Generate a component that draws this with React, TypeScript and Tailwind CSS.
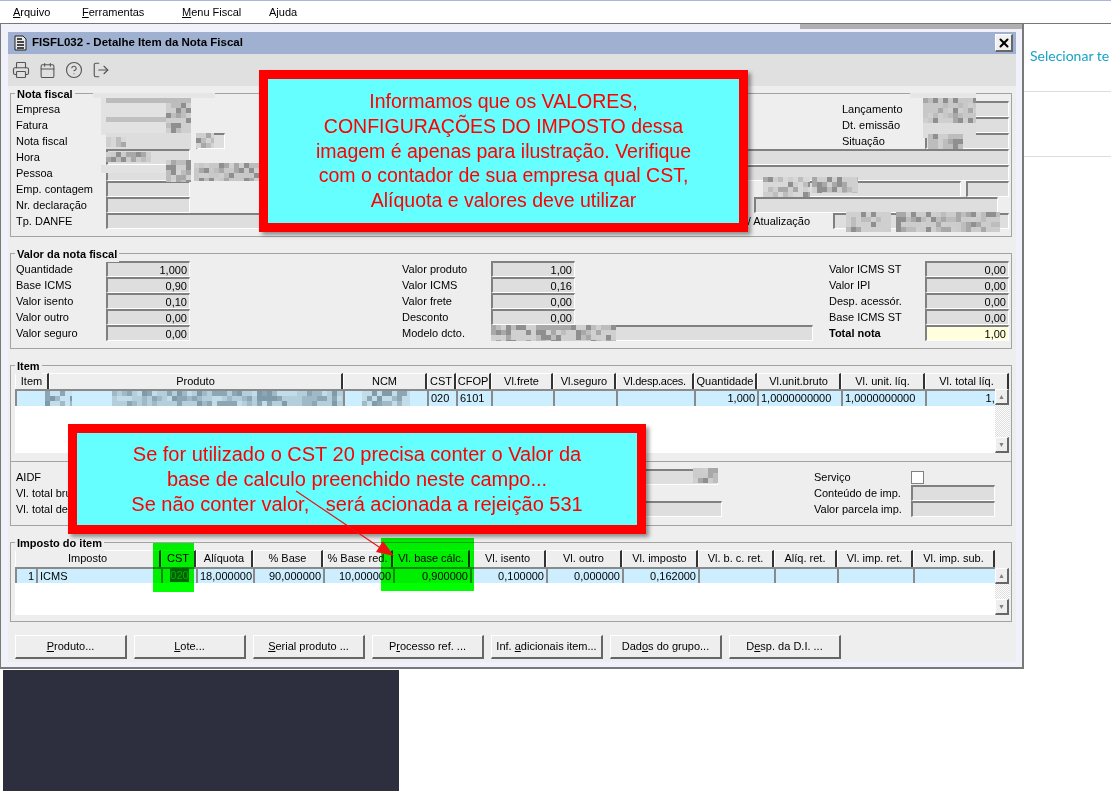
import { Calendar, CircleHelp, LogOut, Printer, X } from 'lucide-react'
import type { ReactNode } from 'react'

const fieldCls =
  'h-4 shrink-0 bg-[#dedede] border-t-2 border-l-2 border-r border-b border-t-[#808080] border-l-[#808080] border-r-white border-b-white text-right pr-[2px] leading-[14px] overflow-hidden'
const raised =
  'bg-[#eeeeee] border border-t-white border-l-white border-r-[#666666] border-b-[#666666] border-r-2 border-b-2'

function Field({ className = '', children }: { className?: string; children?: ReactNode }) {
  return <div className={`${fieldCls} ${className}`}>{children}</div>
}

function Row({ label, children }: { label: string; children?: ReactNode }) {
  return (
    <div className="flex h-4 items-center">
      <div className="w-[90px] shrink-0 truncate leading-4">{label}</div>
      {children}
    </div>
  )
}

function Group({ title, className = '', children }: { title: string; className?: string; children: ReactNode }) {
  return (
    <div className={`relative border border-[#a3a3a3] ${className}`}>
      <span className="absolute left-[4px] top-[-8px] bg-[#eeeeee] px-[2px] font-bold leading-4">{title}</span>
      {children}
    </div>
  )
}

// pixelated censor blocks, cells are 5px like in the picture
function Mosaic({ x, y, w, h, base, dark, seed = 1 }: { x: number; y: number; w: number; h: number; base: string; dark?: string[]; seed?: number }) {
  const cells = []
  let s = seed * 7919
  for (let cy = 0; cy < h; cy += 5) {
    for (let cx = 0; cx < w; cx += 5) {
      s = (s * 1103515245 + 12345) & 0x7fffffff
      if (dark && (s >> 8) % 3 !== 0) {
        const c = dark[(s >> 12) % dark.length]
        cells.push(<rect key={`${cx}-${cy}`} x={cx} y={cy} width={5} height={5} fill={c} />)
      }
    }
  }
  return (
    <svg className="absolute" style={{ left: x, top: y }} width={w} height={h}>
      <rect width={w} height={h} fill={base} />
      {cells}
    </svg>
  )
}

const grays = ['#bdbdbd', '#a8a8a8', '#cfcfcf', '#8f8f8f']
const blues = ['#9fb9c8', '#b4cfdc', '#7f9aa8', '#c2dde8', '#8ca6b4']

const patches = [
  { x: 93, y: 93, w: 122, h: 5, base: '#e6e6e6' },
  { x: 101, y: 98, w: 90, h: 37, base: '#e2e2e2' },
  { x: 106, y: 98, w: 85, h: 5, base: '#bcbcbc' },
  { x: 106, y: 117, w: 80, h: 5, base: '#c0c0c0' },
  { x: 166, y: 103, w: 25, h: 30, base: '#cfcfcf', dark: grays, seed: 2 },
  { x: 106, y: 133, w: 85, h: 16, base: '#dddddd' },
  { x: 106, y: 137, w: 20, h: 10, base: '#d8d8d8', dark: grays, seed: 3 },
  { x: 196, y: 133, w: 18, h: 15, base: '#d4d4d4', dark: grays, seed: 4 },
  { x: 106, y: 152, w: 45, h: 10, base: '#cccccc', dark: grays, seed: 5 },
  { x: 101, y: 165, w: 90, h: 8, base: '#e2e2e2' },
  { x: 166, y: 160, w: 25, h: 22, base: '#d5d5d5', dark: grays, seed: 6 },
  { x: 194, y: 163, w: 65, h: 18, base: '#c8c8c8', dark: grays, seed: 7 },
  { x: 910, y: 93, w: 66, h: 5, base: '#e6e6e6' },
  { x: 923, y: 98, w: 53, h: 25, base: '#c8c8c8', dark: grays, seed: 8 },
  { x: 923, y: 123, w: 53, h: 15, base: '#dddddd' },
  { x: 928, y: 134, w: 35, h: 15, base: '#bdbdbd', dark: grays, seed: 9 },
  { x: 763, y: 177, w: 47, h: 20, base: '#d8d8d8', dark: grays, seed: 10 },
  { x: 812, y: 177, w: 46, h: 16, base: '#d0d0d0', dark: grays, seed: 11 },
  { x: 846, y: 212, w: 45, h: 20, base: '#d0d0d0', dark: grays, seed: 12 },
  { x: 896, y: 212, w: 104, h: 20, base: '#cccccc', dark: grays, seed: 13 },
  { x: 491, y: 325, w: 125, h: 16, base: '#d0d0d0', dark: grays, seed: 14 },
  { x: 693, y: 468, w: 25, h: 15, base: '#cccccc', dark: grays, seed: 15 },
  { x: 45, y: 391, w: 27, h: 15, base: '#c8e4f2', dark: blues, seed: 16 },
  { x: 112, y: 391, w: 231, h: 15, base: '#b4cfdc', dark: blues, seed: 17 },
  { x: 362, y: 391, w: 48, h: 15, base: '#c2dde8', dark: blues, seed: 18 },
]

const itemCols = 'grid grid-cols-[34px_294px_84px_29px_35px_62px_63px_78px_63px_84px_84px_84px_70px]'
const itemHead = ['Item', 'Produto', 'NCM', 'CST', 'CFOP', 'Vl.frete', 'Vl.seguro', 'Vl.desp.aces.', 'Quantidade', 'Vl.unit.bruto', 'Vl. unit. líq.', 'Vl. total líq.']
const impCols = 'grid grid-cols-[21px_125px_35px_57px_70px_70px_77px_76px_76px_76px_76px_63px_76px_82px]'
const impHead = ['CST', 'Alíquota', '% Base', '% Base red.', 'Vl. base cálc.', 'Vl. isento', 'Vl. outro', 'Vl. imposto', 'Vl. b. c. ret.', 'Alíq. ret.', 'Vl. imp. ret.', 'Vl. imp. sub.']

function Head({ text, className = '' }: { text: string; className?: string }) {
  return (
    <div className={`truncate border-r-2 border-r-[#333333] border-t border-l border-t-white border-l-white bg-[#eeeeee] text-center leading-[15px] ${className}`}>
      {text}
    </div>
  )
}

function Cell({ text = '', left = false, className = '' }: { text?: string; left?: boolean; className?: string }) {
  return (
    <div className={`overflow-hidden whitespace-nowrap border-l-2 border-t-2 border-[#8a8a8a] bg-[#cceeff] px-[2px] leading-[15px] ${left ? 'text-left' : 'text-right'} ${className}`}>
      {text}
    </div>
  )
}

function ScrollBar() {
  return (
    <div className="flex w-[14px] shrink-0 flex-col">
      <div className={`${raised} flex h-4 items-center justify-center text-[7px] leading-none text-[#808080]`}>▲</div>
      <div className="flex-1 bg-[repeating-conic-gradient(#dddddd_0_25%,#ffffff_0_50%)] bg-[length:2px_2px]" />
      <div className={`${raised} flex h-4 items-center justify-center text-[7px] leading-none text-[#808080]`}>▼</div>
    </div>
  )
}

function Btn({ children }: { children: ReactNode }) {
  return <div className={`${raised} flex h-6 w-[112px] items-center justify-center whitespace-nowrap`}>{children}</div>
}

const valores: [string, string, string, string, string, string][] = [
  ['Quantidade', '1,000', 'Valor produto', '1,00', 'Valor ICMS ST', '0,00'],
  ['Base ICMS', '0,90', 'Valor ICMS', '0,16', 'Valor IPI', '0,00'],
  ['Valor isento', '0,10', 'Valor frete', '0,00', 'Desp. acessór.', '0,00'],
  ['Valor outro', '0,00', 'Desconto', '0,00', 'Base ICMS ST', '0,00'],
]

export default function App() {
  return (
    <div className="relative h-[791px] w-[1111px] overflow-hidden bg-white font-['Liberation_Sans',Arial,sans-serif] text-[11px] text-black">
      <div className="h-px bg-[#a9b8d8]" />
      {/* Menu */}
      <div className="flex h-[22px] items-center text-[11px]">
        <span className="ml-[13px] w-[69px]"><u>A</u>rquivo</span>
        <span className="w-[100px]"><u>F</u>erramentas</span>
        <span className="w-[87px]"><u>M</u>enu Fiscal</span>
        <span>A<u>j</u>uda</span>
      </div>
      <div className="h-px bg-[#777777]" />

      <div className="flex">
        {/* Window */}
        <div className="h-[645px] w-[1024px] shrink-0 border-b-2 border-l border-r-2 border-[#7a7a7a] bg-[#f1f1fb] pl-[7px] pr-[6px]">
          <div className="ml-[792px] mr-[-6px] h-[5px] bg-[#b0b0b0]" />
          <div className="mt-[3px] h-[630px] w-[1008px] bg-[#eeeeee]">
            {/* Title bar */}
            <div className="flex h-[22px] items-center bg-[#9fb0d0] pl-[6px] pr-[3px]">
              <svg width="13" height="16" viewBox="0 0 13 16">
                <path d="M1 1h8l3 3v11H1z" fill="#e8e8e8" stroke="#222222" />
                <path d="M3 4h5M3 7h7M3 10h7M3 13h7" stroke="#111111" strokeWidth="1.4" />
              </svg>
              <span className="ml-[5px] flex-1 text-[11.5px] font-bold">FISFL032 - Detalhe Item da Nota Fiscal</span>
              <div className={`${raised} flex h-[18px] w-[18px] items-center justify-center bg-[#f0f0f0]`}>
                <X size={14} strokeWidth={3.5} />
              </div>
            </div>
            {/* Toolbar */}
            <div className="flex h-[32px] items-center gap-[9px] bg-[#e0e0e0] pl-[4px] text-[#555555]">
              <Printer size={18} strokeWidth={1.5} />
              <Calendar size={17} strokeWidth={1.5} />
              <CircleHelp size={18} strokeWidth={1.5} />
              <LogOut size={18} strokeWidth={1.5} className="rotate-0" />
            </div>

            <div className="px-[2px] pt-[7px]">
              {/* Nota fiscal */}
              <Group title="Nota fiscal" className="h-[144px] w-[1002px] pl-[5px] pr-[2px] pt-[7px]">
                <Row label="Empresa">
                  <Field className="w-[84px]" />
                  <div className="w-[652px] shrink-0" />
                  <div className="w-[83px] shrink-0 truncate">Lançamento</div>
                  <Field className="w-[84px]" />
                </Row>
                <Row label="Fatura">
                  <Field className="w-[84px]" />
                  <div className="w-[652px] shrink-0" />
                  <div className="w-[83px] shrink-0 truncate">Dt. emissão</div>
                  <Field className="w-[84px]" />
                </Row>
                <Row label="Nota fiscal">
                  <Field className="w-[84px]" />
                  <div className="w-[6px] shrink-0" />
                  <Field className="w-[29px]" />
                  <div className="w-[617px] shrink-0" />
                  <div className="w-[83px] shrink-0 truncate">Situação</div>
                  <Field className="w-[84px]" />
                </Row>
                <Row label="Hora">
                  <Field className="w-[84px]" />
                  <div className="w-[69px] shrink-0" />
                  <Field className="w-[750px]" />
                </Row>
                <Row label="Pessoa">
                  <Field className="w-[84px]" />
                  <div className="w-[4px] shrink-0" />
                  <Field className="w-[815px]" />
                </Row>
                <Row label="Emp. contagem">
                  <Field className="w-[84px]" />
                  <div className="w-[574px] shrink-0" />
                  <Field className="w-[197px]" />
                  <div className="w-[5px] shrink-0" />
                  <Field className="w-[43px]" />
                </Row>
                <Row label="Nr. declaração">
                  <Field className="w-[84px]" />
                  <div className="w-[555px] shrink-0 text-right">-e</div>
                  <div className="w-[9px] shrink-0" />
                  <Field className="w-[244px]" />
                </Row>
                <Row label="Tp. DANFE">
                  <Field className="w-[560px]" />
                  <div className="w-[144px] shrink-0 text-right">r / Atualização</div>
                  <div className="w-[23px] shrink-0" />
                  <Field className="w-[176px]" />
                </Row>
              </Group>

              {/* Valor da nota fiscal */}
              <Group title="Valor da nota fiscal" className="mt-4 h-[96px] w-[1002px] pl-[5px] pt-[7px]">
                {valores.map(v => (
                  <Row key={v[0]} label={v[0]}>
                    <Field className="w-[84px]">{v[1]}</Field>
                    <div className="w-[212px] shrink-0" />
                    <div className="w-[89px] shrink-0">{v[2]}</div>
                    <Field className="w-[84px]">{v[3]}</Field>
                    <div className="w-[254px] shrink-0" />
                    <div className="w-[96px] shrink-0">{v[4]}</div>
                    <Field className="w-[84px]">{v[5]}</Field>
                  </Row>
                ))}
                <Row label="Valor seguro">
                  <Field className="w-[84px]">0,00</Field>
                  <div className="w-[212px] shrink-0" />
                  <div className="w-[89px] shrink-0">Modelo dcto.</div>
                  <Field className="w-[322px]" />
                  <div className="w-[16px] shrink-0" />
                  <div className="w-[96px] shrink-0 font-bold">Total nota</div>
                  <Field className="w-[84px] bg-[#ffffdd]">1,00</Field>
                </Row>
              </Group>

              {/* Item */}
              <Group title="Item" className="mt-4 h-[97px] w-[1002px] pl-[4px] pt-[7px]">
                <div className="flex h-20 w-[994px]">
                  <div className="h-20 w-[980px] shrink-0 bg-white">
                    <div className={`${itemCols} h-4`}>
                      {itemHead.slice(0, 7).map(h => <Head key={h} text={h} />)}
                      <Head text="Vl.desp.aces." className="tracking-tight" />
                      {itemHead.slice(8).map(h => <Head key={h} text={h} />)}
                    </div>
                    <div className={`${itemCols} h-[17px]`}>
                      <Cell /><Cell /><Cell />
                      <Cell text="020" left />
                      <Cell text="6101" left />
                      <Cell /><Cell /><Cell />
                      <Cell text="1,000" />
                      <Cell text="1,0000000000" left />
                      <Cell text="1,0000000000" left />
                      <Cell text="1,00" />
                    </div>
                  </div>
                  <div className="mt-[16px] flex h-[64px]"><ScrollBar /></div>
                </div>
              </Group>

              {/* AIDF */}
              <div className="h-[64px] w-[1002px] border border-t-0 border-[#a3a3a3] pl-[5px] pt-[7px]">
                <Row label="AIDF">
                  <Field className="w-[612px]" />
                  <div className="w-[96px] shrink-0" />
                  <div className="w-[97px] shrink-0">Serviço</div>
                  <div className="h-[13px] w-[13px] shrink-0 border border-[#808080] bg-white" />
                </Row>
                <Row label="Vl. total bruto">
                  <div className="w-[708px] shrink-0" />
                  <div className="w-[97px] shrink-0">Conteúdo de imp.</div>
                  <Field className="w-[84px]" />
                </Row>
                <Row label="Vl. total de">
                  <Field className="w-[616px]" />
                  <div className="w-[92px] shrink-0" />
                  <div className="w-[97px] shrink-0">Valor parcela imp.</div>
                  <Field className="w-[84px]" />
                </Row>
              </div>

              {/* Imposto do item */}
              <Group title="Imposto do item" className="mt-4 h-[80px] w-[1002px] pl-[4px] pt-[7px]">
                <div className="flex h-[65px] w-[994px]">
                  <div className="h-[65px] w-[980px] shrink-0 bg-white">
                    <div className={`${impCols} h-[17px]`}>
                      <Head text="Imposto" className="col-span-2" />
                      {impHead.map(h => <Head key={h} text={h} />)}
                    </div>
                    <div className={`${impCols} h-4`}>
                      <Cell text="1" />
                      <Cell text="ICMS" left />
                      <Cell className="text-center"><span /></Cell>
                      <Cell text="18,000000" />
                      <Cell text="90,000000" />
                      <Cell text="10,000000" />
                      <Cell text="0,900000" />
                      <Cell text="0,100000" />
                      <Cell text="0,000000" />
                      <Cell text="0,162000" />
                      <Cell /><Cell /><Cell /><Cell />
                    </div>
                  </div>
                  <div className="mt-[18px] flex h-[47px]"><ScrollBar /></div>
                </div>
              </Group>

              {/* Botoes */}
              <div className="mt-[13px] flex gap-[7px] pl-[5px]">
                <Btn><span><u>P</u>roduto...</span></Btn>
                <Btn><span><u>L</u>ote...</span></Btn>
                <Btn><span><u>S</u>erial produto ...</span></Btn>
                <Btn><span>P<u>r</u>ocesso ref. ...</span></Btn>
                <Btn><span>Inf. <u>a</u>dicionais item...</span></Btn>
                <Btn><span>Dad<u>o</u>s do grupo...</span></Btn>
                <Btn><span>D<u>e</u>sp. da D.I. ...</span></Btn>
              </div>
            </div>
          </div>
        </div>

        {/* Painel direito */}
        <div className="flex-1 overflow-hidden">
          <div className="h-[68px] whitespace-nowrap border-b border-[#dddddd] pl-[6px] pt-[24px] font-['Lato',sans-serif] text-[14px] leading-4 text-[#16a3c4]">
            Selecionar te
          </div>
          <div className="h-[65px] border-b border-[#dddddd]" />
        </div>
      </div>

      {/* Painel escuro */}
      <div className="ml-[3px] mt-px h-[121px] w-[396px] bg-[#2d2f3e]" />

      {/* Desfoque de dados */}
      {patches.map((p, i) => <Mosaic key={i} {...p} />)}

      {/* Celula selecionada e marcacoes verdes */}
      <div className="absolute left-[170px] top-[568px] h-[14px] w-[19px] bg-[#16651f] text-center leading-[14px] text-[#6fae6f]">020</div>
      <div className="absolute left-[153px] top-[543px] h-[49px] w-[41px] bg-[#00ff00] mix-blend-multiply" />
      <div className="absolute left-[381px] top-[538px] h-[53px] w-[93px] bg-[#00ff00] mix-blend-multiply" />

      {/* Avisos */}
      <div className="absolute left-[259px] top-[70px] flex h-[162px] w-[489px] items-center justify-center border-[9px] border-[#ff0000] bg-[#66ffff] text-center text-[19.5px] leading-[24.7px] text-[#ff0000] shadow-[3px_3px_4px_rgba(0,0,0,0.4)]">
        <p>
          Informamos que os VALORES,<br />
          CONFIGURAÇÕES DO IMPOSTO dessa<br />
          imagem é apenas para ilustração. Verifique<br />
          com o contador de sua empresa qual CST,<br />
          Alíquota e valores deve utilizar
        </p>
      </div>
      <div className="absolute left-[68px] top-[424px] flex h-[110px] w-[578px] items-center justify-center border-[9px] border-[#ff0000] bg-[#66ffff] text-center text-[20px] leading-[25px] text-[#ff0000] shadow-[3px_3px_4px_rgba(0,0,0,0.4)]">
        <p>
          Se for utilizado o CST 20 precisa conter o Valor da<br />
          base de calculo preenchido neste campo...<br />
          Se não conter valor,&nbsp;&nbsp; será acionada a rejeição 531
        </p>
      </div>

      {/* Seta */}
      <svg className="absolute left-[290px] top-[485px]" width="110" height="80" viewBox="0 0 110 80">
        <path d="M6 6L92 64" stroke="#ee1111" strokeWidth="1.2" fill="none" />
        <path d="M104 71L86 67L93 56z" fill="#ee1111" />
      </svg>
    </div>
  )
}
